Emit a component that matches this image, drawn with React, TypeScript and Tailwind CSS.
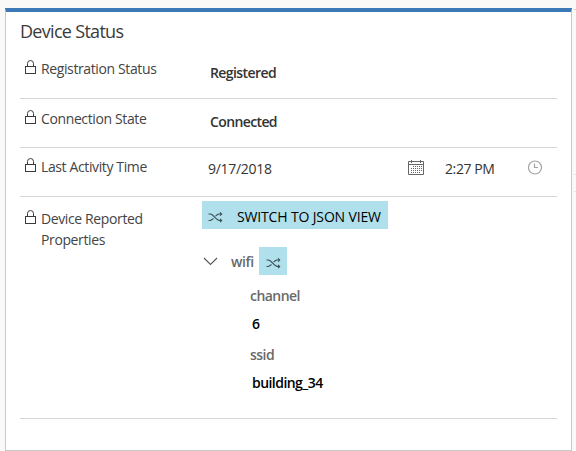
import type { ReactNode } from "react";

function LockIcon() {
  return (
    <svg className="mt-px block h-[15px] w-[12px] shrink-0" viewBox="0 0 12 15" fill="none" stroke="#3b3b3b" strokeWidth="1">
      <rect x="0.5" y="6.5" width="10" height="7" />
      <path d="M2.5 6.5V3.5a3 3 0 0 1 6 0v3" />
    </svg>
  );
}

function ShuffleIcon() {
  return (
    <svg className="block h-[12px] w-[15px] shrink-0" viewBox="0 0 15 12" fill="none" stroke="#3c4f54" strokeWidth="1.1">
      <path d="M0.5 3H2.5L4.5 4L9 8.3L11 9.5H13.5M0.5 9.5H2.5L5.5 7.5M7.5 5.2L9.5 3.5L11 3H13.5" />
      <path d="M12 1.3L13.7 3L12 4.7M12 7.8L13.7 9.5L12 11.2" />
    </svg>
  );
}

function CalendarIcon() {
  return (
    <svg className="block h-[16px] w-[17px]" viewBox="0 0 17 16" fill="none" stroke="#666" strokeWidth="1">
      <path d="M0.5 1.5H15.5V14.5H0.5ZM0.5 4.5H15.5M3.5 0V3M12.5 0V3" />
      <path d="M5 6.5H14M3 8.5H14M3 10.5H14M3 12.5H12" strokeDasharray="1 1" />
    </svg>
  );
}

function ClockIcon() {
  return (
    <svg className="mt-px block h-[15px] w-[15px]" viewBox="0 0 15 15" fill="none" stroke="#a3a3a3" strokeWidth="1.2">
      <circle cx="7" cy="7.5" r="6.5" />
      <path d="M6.5 3.5V7.5H10" />
    </svg>
  );
}

function Row({ label, labelTop, height, children }: { label: ReactNode; labelTop: string; height: string; children: ReactNode }) {
  return (
    <div className={`flex border-b border-[#d6d6d6] ${height}`}>
      <div className={`flex w-[182px] shrink-0 pl-[5px] ${labelTop}`}>
        <LockIcon />
        <div className="-mt-px ml-1 text-[14px] leading-[21px] tracking-[-0.38px] text-[#444]">{label}</div>
      </div>
      <div className="grow">{children}</div>
    </div>
  );
}

export default function App() {
  return (
    <div className="flex h-[451px] w-[576px] justify-between overflow-hidden bg-[#faf9f8] pl-[5px] pt-2 font-['Open_Sans','Noto_Sans',sans-serif]">
      <section className="h-[443px] w-[567px] border border-t-4 border-[#c8c8c8] border-t-[#3b79b7] bg-white pl-[14px] pr-[14px]">
        <h2 className="h-[38px] pt-[6px] text-[18px] leading-[26px] tracking-[-0.7px] text-[#3a3a3a]">Device Status</h2>
        <Row label="Registration Status" labelTop="pt-[9px]" height="h-[49px]">
          <div className="pl-2 pt-[13px] text-[14px] font-semibold leading-5 tracking-[-0.58px] text-[#333]">Registered</div>
        </Row>
        <Row label="Connection State" labelTop="pt-[10px]" height="h-[49px]">
          <div className="pl-2 pt-[13px] text-[14px] font-semibold leading-5 tracking-[-0.62px] text-[#333]">Connected</div>
        </Row>
        <Row label="Last Activity Time" labelTop="pt-[9px]" height="h-[49px]">
          <div className="flex pl-[6px] pt-[11px] text-[14px] leading-5 text-[#333]">
            <span className="w-[200px] tracking-[-0.3px]">9/17/2018</span>
            <div className="pt-px"><CalendarIcon /></div>
            <span className="ml-5 w-[83px] tracking-[-0.4px]">2:27 PM</span>
            <ClockIcon />
          </div>
        </Row>
        <Row label={<>Device Reported<br />Properties</>} labelTop="pt-[12px]" height="h-[222px]">
          <button className="mt-1 flex h-7 w-[186px] items-center bg-[#b1e0ed] pl-[6px] pt-[3px] text-[14px] text-black">
            <ShuffleIcon />
            <span className="ml-[14px] whitespace-nowrap tracking-[-0.15px]">SWITCH TO JSON VIEW</span>
          </button>
          <div className="mt-[18px] flex h-7 items-center">
            <svg className="ml-[1px] h-[10px] w-[15px]" viewBox="0 0 15 10" fill="none" stroke="#555" strokeWidth="1.1">
              <path d="M1 2L7.5 8.5L14 2" />
            </svg>
            <span className="ml-[13px] w-[28px] text-[14px] font-semibold tracking-[-0.4px] text-[#696969]">wifi</span>
            <button className="flex size-7 items-center bg-[#b1e0ed] pl-[7px] pt-1">
              <ShuffleIcon />
            </button>
          </div>
          <div className="pl-12 pt-[11px] text-[14px] font-semibold leading-5 tracking-[-0.55px]">
            <div className="text-[#696969]">channel</div>
            <div className="pl-[2px] pt-2 text-black">6</div>
            <div className="pt-[11px] text-[#696969]">ssid</div>
            <div className="pl-[2px] pt-2 text-black">building_34</div>
          </div>
        </Row>
      </section>
      <div className="h-full w-[2px] pt-px">
        <div className="h-px bg-[#d3d3d3]" />
        <div className="mt-[164px] h-px bg-[#e5e5e5]" />
        <div className="mt-4 h-px bg-[#e5e5e5]" />
      </div>
    </div>
  );
}
